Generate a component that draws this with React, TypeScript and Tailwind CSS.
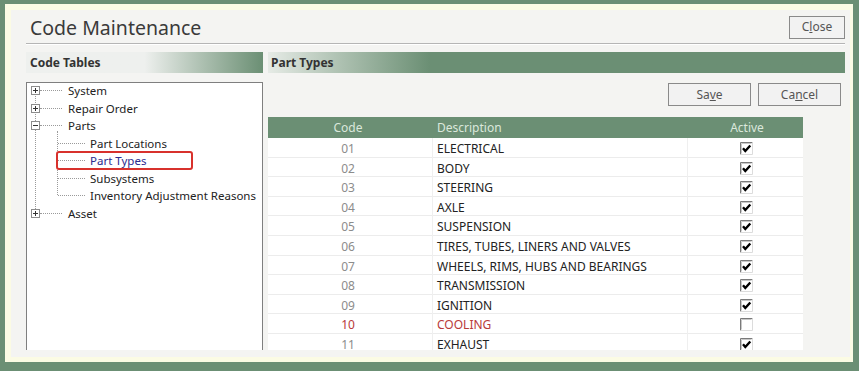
import React from "react";

function PlusBox({ minus = false }: { minus?: boolean }) {
  return (
    <svg width="9" height="9" viewBox="0 0 9 9" className="relative shrink-0">
      <rect x="0.5" y="0.5" width="8" height="8" fill="#fff" stroke="#8c8c8c" />
      <line x1="2" y1="4.5" x2="7" y2="4.5" stroke="#333" />
      {!minus && <line x1="4.5" y1="2" x2="4.5" y2="7" stroke="#333" />}
    </svg>
  );
}

function RootRow({ label, minus = false }: { label: string; minus?: boolean }) {
  return (
    <div className="flex h-[17.5px] items-center pl-[4px]">
      <PlusBox minus={minus} />
      <div className="w-[22px] border-t border-dotted border-[#9a9a9a]" />
      <span className="ml-[6px] text-[#222]">{label}</span>
    </div>
  );
}

function ChildRow({ label, selected = false }: { label: string; selected?: boolean }) {
  return (
    <div className="relative flex h-[17.5px] items-center pl-[31px]">
      <div className="w-[27px] border-t border-dotted border-[#9a9a9a]" />
      <span className={"ml-[5px] " + (selected ? "text-[#2b2b8f]" : "text-[#222]")}>{label}</span>
      {selected && (
        <div className="absolute left-[29px] top-[-1px] h-[19px] w-[137px] rounded-[3px] border-2 border-[#d8312c]" />
      )}
    </div>
  );
}

function Check({ checked }: { checked: boolean }) {
  return (
    <svg width="13" height="13" viewBox="0 0 13 13">
      <rect x="0" y="0" width="13" height="13" fill="#fff" />
      <path d="M0.5 12.5 V0.5 H12.5" fill="none" stroke="#7a7a7a" />
      <path d="M12.5 0.5 V12.5 H0.5" fill="none" stroke="#dcdcdc" />
      <path d="M1.5 11.5 V1.5 H11.5" fill="none" stroke="#c8c8c8" />
      {checked && (
        <path d="M3 6.3 L5.3 9 L10.3 3.5" fill="none" stroke="#000" strokeWidth="2.4" strokeLinejoin="miter" />
      )}
    </svg>
  );
}

const rows: [string, string, boolean][] = [
  ["01", "ELECTRICAL", true],
  ["02", "BODY", true],
  ["03", "STEERING", true],
  ["04", "AXLE", true],
  ["05", "SUSPENSION", true],
  ["06", "TIRES, TUBES, LINERS AND VALVES", true],
  ["07", "WHEELS, RIMS, HUBS AND BEARINGS", true],
  ["08", "TRANSMISSION", true],
  ["09", "IGNITION", true],
  ["10", "COOLING", false],
  ["11", "EXHAUST", true],
];

function Btn({ children, w }: { children: React.ReactNode; w: string }) {
  return (
    <div
      className={
        "flex h-[23px] items-center justify-center border border-[#8a8a8a] bg-[#f2f2f2] text-[12px] text-[#555] " + w
      }
    >
      {children}
    </div>
  );
}

export default function App() {
  return (
    <div
      className="h-[371px] w-[859px] overflow-hidden bg-[#6b8f74] pb-[9px] pl-[5px] pr-[6px] pt-[4px]"
      style={{ fontFamily: '"Noto Sans", "DejaVu Sans", sans-serif' }}
    >
      <div className="h-full w-full bg-[#fbfbe4] pb-[5px] pl-[6px] pr-[3px] pt-[6px]">
        <div className="flex h-full w-full flex-col overflow-hidden bg-[#f4f4f2] pl-[15px] pr-[5px] pt-[6px]">
          {/* Title row */}
          <div className="flex h-[28px] shrink-0 items-center justify-between border-b border-[#b5b5b5] pl-[4px]">
            <div className="mt-[-3px] text-[19.5px] leading-none text-[#3a3a3a]">Code Maintenance</div>
            <div className="mb-[1px] mt-[-4px]">
              <Btn w="w-[56px]">
                C<span className="underline">l</span>ose
              </Btn>
            </div>
          </div>
          <div className="h-px shrink-0 bg-white" />

          {/* Headers */}
          <div className="mt-[7px] flex shrink-0 gap-[5px]">
            <div className="flex h-[21px] w-[237px] items-center bg-linear-to-r from-[#eef0ee] from-50% to-[#6b8f74] pl-[4px] text-[12px] font-bold text-[#333]">
              Code Tables
            </div>
            <div className="flex h-[21px] flex-1 items-center bg-linear-to-r from-[#e6ebe6] to-[#6b8f74] to-28% pl-[3px] text-[12px] font-bold text-[#333]">
              Part Types
            </div>
          </div>

          {/* Body */}
          <div className="mt-[9px] flex h-[268px] shrink-0 gap-[5px] overflow-hidden">
            {/* Tree */}
            <div className="relative h-[272px] w-[237px] border border-b-0 border-[#7f7f7f] bg-white text-[11.5px]">
              <div className="absolute left-[8px] top-[7px] h-[123px] border-l border-dotted border-[#9a9a9a]" />
              <div className="absolute left-[30px] top-[48px] h-[64px] border-l border-dotted border-[#9a9a9a]" />
              <div className="mt-[-1px]">
                <RootRow label="System" />
                <RootRow label="Repair Order" />
                <RootRow label="Parts" minus />
                <ChildRow label="Part Locations" />
                <ChildRow label="Part Types" selected />
                <ChildRow label="Subsystems" />
                <ChildRow label="Inventory Adjustment Reasons" />
                <RootRow label="Asset" />
              </div>
            </div>

            {/* Right panel */}
            <div className="flex flex-1 flex-col">
              <div className="mt-[1px] flex justify-end gap-[7px] pr-[4px]">
                <Btn w="w-[83px]">
                  Sa<span className="underline">v</span>e
                </Btn>
                <Btn w="w-[83px]">
                  Ca<span className="underline">n</span>cel
                </Btn>
              </div>
              <div className="mt-[11px] w-[535px] text-[12px]">
                <div className="grid h-[21px] grid-cols-[164px_255px_116px] items-center bg-[#6b8f74] text-[#dbe8dc]">
                  <div className="pr-[4px] text-center">Code</div>
                  <div className="pl-[5px]">Description</div>
                  <div className="pl-[4px] text-center">Active</div>
                </div>
                {rows.map(([code, desc, active]) => {
                  const red = code === "10";
                  return (
                    <div
                      key={code}
                      className="grid h-[19.6px] grid-cols-[164px_255px_116px] border-b border-[#ececec] bg-white"
                    >
                      <div
                        className={
                          "flex items-center justify-center pr-[4px] pt-[2px] " +
                          (red ? "text-[#b83a3a]" : "text-[#8c8c8c]")
                        }
                      >
                        {code}
                      </div>
                      <div
                        className={
                          "flex items-center border-l border-[#efefef] pl-[4px] pt-[2px] " +
                          (red ? "text-[#b83a3a]" : "text-[#222]")
                        }
                      >
                        {desc}
                      </div>
                      <div className="flex items-center justify-center border-l border-[#efefef] pl-[2px] pt-[1px]">
                        <Check checked={active} />
                      </div>
                    </div>
                  );
                })}
              </div>
            </div>
          </div>
        </div>
      </div>
    </div>
  );
}
